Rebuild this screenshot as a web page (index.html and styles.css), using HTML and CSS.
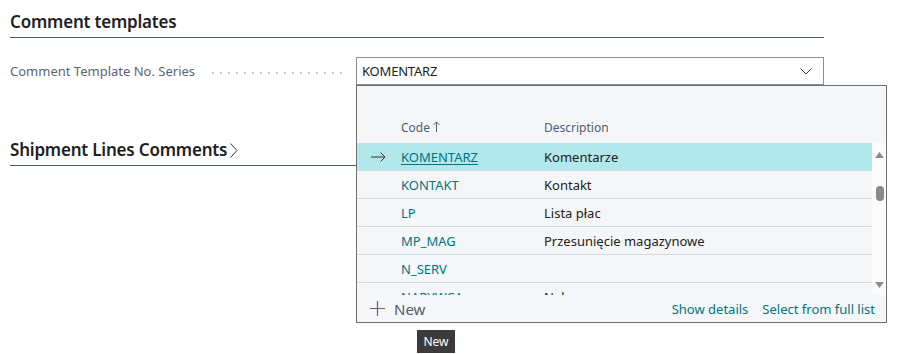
FILE: index.html
```html
<!DOCTYPE html>
<html>
<head>
<meta charset="utf-8">
<link rel="stylesheet" href="styles.css">
</head>
<body>
<div class="page">
  <h2 class="section-title">Comment templates</h2>
  <div class="field-row">
    <div class="label"><span>Comment Template No. Series</span><span class="leader"></span></div>
    <div class="combo">
      <div class="input">
        <span class="value">KOMENTARZ</span>
        <svg class="chev" width="12" height="7" viewBox="0 0 12 7"><path d="M0.5 0.5 L6 6 L11.5 0.5" fill="none" stroke="#3a3a3a" stroke-width="1"/></svg>
      </div>
      <div class="dropdown">
        <div class="dd-body">
          <div class="dd-list">
            <div class="dd-head">
              <span class="c-arrow"></span>
              <span class="c-code">Code<svg class="sort" width="7" height="11" viewBox="0 0 7 11"><path d="M3.5 1 V11 M0.5 4 L3.5 1 L6.5 4" fill="none" stroke="#505c6d" stroke-width="1"/></svg></span>
              <span class="c-desc">Description</span>
            </div>
            <div class="dd-rows">
              <div class="row selected">
                <span class="c-arrow"><svg width="15" height="10" viewBox="0 0 15 10"><path d="M0 5 H14 M9.5 0.5 L14 5 L9.5 9.5" fill="none" stroke="#333" stroke-width="1"/></svg></span>
                <span class="c-code link">KOMENTARZ</span>
                <span class="c-desc">Komentarze</span>
              </div>
              <div class="row"><span class="c-arrow"></span><span class="c-code">KONTAKT</span><span class="c-desc">Kontakt</span></div>
              <div class="row"><span class="c-arrow"></span><span class="c-code">LP</span><span class="c-desc">Lista płac</span></div>
              <div class="row"><span class="c-arrow"></span><span class="c-code">MP_MAG</span><span class="c-desc">Przesunięcie magazynowe</span></div>
              <div class="row"><span class="c-arrow"></span><span class="c-code">N_SERV</span><span class="c-desc"></span></div>
              <div class="row"><span class="c-arrow"></span><span class="c-code">NARYWCA</span><span class="c-desc">Naływa</span></div>
            </div>
          </div>
          <div class="scrollbar">
            <svg class="tri" width="9" height="6" viewBox="0 0 9 6"><path d="M0 6 L4.5 0 L9 6 Z" fill="#8c8c8c"/></svg>
            <div class="track"><div class="thumb"></div></div>
            <svg class="tri" width="9" height="6" viewBox="0 0 9 6"><path d="M0 0 L4.5 6 L9 0 Z" fill="#8c8c8c"/></svg>
          </div>
        </div>
        <div class="dd-foot">
          <div class="new-btn">
            <svg width="15" height="15" viewBox="0 0 15 15"><path d="M7.5 0 V15 M0 7.5 H15" stroke="#666" stroke-width="1.2" fill="none"/></svg>
            <span>New</span>
            <span class="tooltip">New</span>
          </div>
          <div class="foot-links">
            <span>Show details</span>
            <span>Select from full list</span>
          </div>
        </div>
      </div>
    </div>
  </div>
  <h2 class="section-title second">Shipment Lines Comments<svg class="more" width="8" height="15" viewBox="0 0 8 15"><path d="M0.5 0.5 L7 7.5 L0.5 14.5" fill="none" stroke="#333" stroke-width="1"/></svg></h2>
</div>
</body>
</html>
```
FILE: styles.css
```css
* { box-sizing: border-box; }
html, body { margin: 0; padding: 0; background: #fff; }
body {
  font-family: "Noto Sans", "Open Sans", sans-serif;
  color: #212121;
  width: 900px;
  height: 354px;
  overflow: hidden;
}
.page {
  padding: 10px 0 0 10px;
  width: 824px;
}
.section-title {
  margin: 0;
  font-size: 17px;
  font-weight: 600;
  line-height: 23px;
  padding-bottom: 4px;
  border-bottom: 1px solid #4b5a69;
  color: #212121;
  letter-spacing: -0.2px;
  display: flex;
  align-items: center;
}
.section-title.second {
  margin-top: 53px;
}
.more { margin-left: 3px; margin-top: 1px; }
.field-row {
  display: flex;
  margin-top: 19px;
  align-items: center;
}
.label {
  width: 346px;
  display: flex;
  align-items: center;
  font-size: 13px;
  color: #5a6575;
  white-space: nowrap;
}
.leader {
  flex: 1;
  margin: 3px 9px 0 14px;
  height: 2px;
  background-image: radial-gradient(circle, #c9c9c9 0.9px, transparent 1.1px);
  background-size: 8px 2px;
  background-position: 0 0;
}
.combo {
  position: relative;
  width: 468px;
}
.input {
  height: 28px;
  border: 1px solid #8a8f96;
  display: flex;
  align-items: center;
  padding: 0 6px 0 5px;
  font-size: 13px;
  color: #212121;
  background: #fff;
}
.value { flex: 1; letter-spacing: -0.2px; }
.chev { margin-right: 5px; margin-top: 1px; }
.dropdown {
  position: absolute;
  left: 0;
  top: 28px;
  width: 531px;
  height: 238px;
  border: 1px solid #6e6e6e;
  background: #f5f6f8;
  display: flex;
  flex-direction: column;
  z-index: 5;
}
.dd-body {
  display: flex;
  height: 209px;
}
.dd-list {
  flex: 1;
  padding-top: 27px;
  overflow: hidden;
}
.dd-head {
  display: flex;
  align-items: center;
  height: 30px;
  font-size: 12px;
  color: #505c6d;
  padding-bottom: 1px;
}
.dd-head .c-code { display: flex; align-items: center; }
.sort { margin-left: 3px; margin-top: -2px; }
.dd-rows {
  height: 152px;
  overflow: hidden;
}
.row {
  display: flex;
  align-items: center;
  height: 28px;
  border-bottom: 1px solid #d6d8db;
  font-size: 13px;
}
.row.selected {
  background: #b2e8eb;
  border-bottom-color: #c8dde0;
}
.c-arrow {
  width: 44px;
  padding-left: 14px;
  display: flex;
  align-items: center;
}
.c-code {
  width: 143px;
  color: #00747f;
}
.dd-head .c-code { color: #505c6d; }
.c-code.link { text-decoration: underline; text-underline-offset: 2px; }
.c-desc { color: #212121; }
.dd-head .c-desc { color: #505c6d; }
.scrollbar {
  width: 14px;
  margin-top: 57px;
  background: #fbfbfb;
  display: flex;
  flex-direction: column;
  align-items: center;
  padding: 9px 0 7px 1px;
}
.tri { flex: none; }
.track {
  flex: 1;
  width: 100%;
  padding-top: 28px;
  display: flex;
  justify-content: center;
}
.thumb {
  width: 8px;
  height: 15px;
  border-radius: 4px;
  background: #8a8a8a;
}
.dd-foot {
  flex: 1;
  display: flex;
  align-items: center;
  justify-content: space-between;
  padding: 0 11px 0 13px;
  background: #f5f6f8;
}
.new-btn {
  position: relative;
  display: flex;
  align-items: center;
  gap: 9px;
  font-size: 15px;
  color: #505c6d;
}
.tooltip {
  position: absolute;
  left: 47px;
  top: 31px;
  width: 38px;
  height: 23px;
  background: #3b3b3b;
  color: #fff;
  font-size: 12px;
  display: flex;
  align-items: center;
  justify-content: center;
}
.foot-links {
  display: flex;
  gap: 14px;
  font-size: 13px;
  color: #00747f;
}
```
